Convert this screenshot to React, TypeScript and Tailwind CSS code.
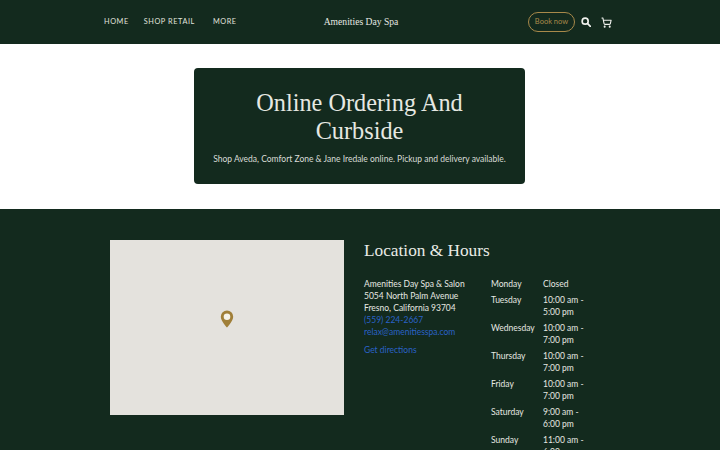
import { ShoppingCart } from "lucide-react";

const hours = [
  { day: "Monday", time: ["Closed"] },
  { day: "Tuesday", time: ["10:00 am -", "5:00 pm"] },
  { day: "Wednesday", time: ["10:00 am -", "7:00 pm"] },
  { day: "Thursday", time: ["10:00 am -", "7:00 pm"] },
  { day: "Friday", time: ["10:00 am -", "7:00 pm"] },
  { day: "Saturday", time: ["9:00 am -", "6:00 pm"] },
  { day: "Sunday", time: ["11:00 am -", "6:00 pm"] },
];

const serif = "font-['Liberation_Serif',serif]";

const App = () => {
  return (
    <div className="h-[450px] w-[720px] overflow-hidden bg-white font-['Lato',sans-serif] text-[8.5px] text-[#e6e8e2]">
      {/* Header */}
      <header className="flex h-11 items-center bg-[#132a1e] pl-[104px] pr-[108px]">
        <nav className="flex w-[219px] text-[7.3px] tracking-[0.08em] text-[#e0e3dd]">
          <span className="mr-[15px]">HOME</span>
          <span className="mr-[18px]">SHOP RETAIL</span>
          <span>MORE</span>
        </nav>
        <div className={`${serif} w-[76px] whitespace-nowrap text-center text-[9.6px] text-[#e6e8e2]`}>
          Amenities Day Spa
        </div>
        <div className="ml-auto flex items-center">
          <span className="flex h-5 w-[47px] items-center justify-center rounded-full border border-[#a8894a] text-[7.5px] text-[#a8894a]">
            Book now
          </span>
          <svg className="ml-1.5 h-[10px] w-[10px]" viewBox="0 0 12 12" fill="none" stroke="#f1f2ee" strokeWidth="2">
            <circle cx="5" cy="5" r="3.6" />
            <path d="M8 8l3.2 3.2" strokeLinecap="round" />
          </svg>
          <ShoppingCart className="ml-[10px] h-[11px] w-[11px] text-[#f1f2ee]" strokeWidth={2.4} />
        </div>
      </header>

      {/* Hero */}
      <section className="flex h-[165px] justify-center bg-white pr-px pt-6">
        <div className="flex h-[116px] w-[331px] flex-col items-center rounded bg-[#132a1e] pt-[21px]">
          <h1 className={`${serif} w-[240px] text-center text-[24.3px] leading-[28px] text-[#e6e8e2]`}>
            Online Ordering And Curbside
          </h1>
          <p className="mt-2 whitespace-nowrap leading-3 text-[#d9dcd6]">
            Shop Aveda, Comfort Zone &amp; Jane Iredale online. Pickup and delivery available.
          </p>
        </div>
      </section>

      {/* Location */}
      <section className="flex h-[241px] items-start bg-[#132a1e] pl-[110px] pt-[31px]">
        <div className="relative h-[175px] w-[234px] bg-[#e4e2dd]">
          <svg className="absolute left-[110px] top-[70px] h-[18px] w-[14px]" viewBox="0 0 14 18">
            <path d="M7 .5A6.2 6.2 0 0 0 .8 6.7C.8 11 7 17.5 7 17.5s6.2-6.500 6.200-10.800A6.200 6.200 0 0 0 7 .5z" fill="#a07f38" />
            <circle cx="7" cy="6.700" r="3.300" fill="#f6f3e8" />
          </svg>
        </div>
        <div className="ml-5 flex-1">
          <h2 className={`${serif} text-[17.3px] leading-[22px] text-[#e9ebe6]`}>Location &amp; Hours</h2>
          <div className="mt-4 flex">
            <div className="w-[127px] leading-3">
              <p>Amenities Day Spa &amp; Salon</p>
              <p>5054 North Palm Avenue</p>
              <p>Fresno, California 93704</p>
              <p className="text-[#2a62c8]">(559) 224-2667</p>
              <p className="text-[#2a62c8]">relax@amenitiesspa.com</p>
              <p className="mt-1.5 text-[#2a62c8]">Get directions</p>
            </div>
            <div className="flex flex-col gap-1 leading-3">
              {hours.map((row) => (
                <div key={row.day} className="flex">
                  <span className="w-[52px]">{row.day}</span>
                  <span>
                    {row.time.map((line) => (
                      <span key={line} className="block">
                        {line}
                      </span>
                    ))}
                  </span>
                </div>
              ))}
            </div>
          </div>
        </div>
      </section>
    </div>
  );
};

export default App;
